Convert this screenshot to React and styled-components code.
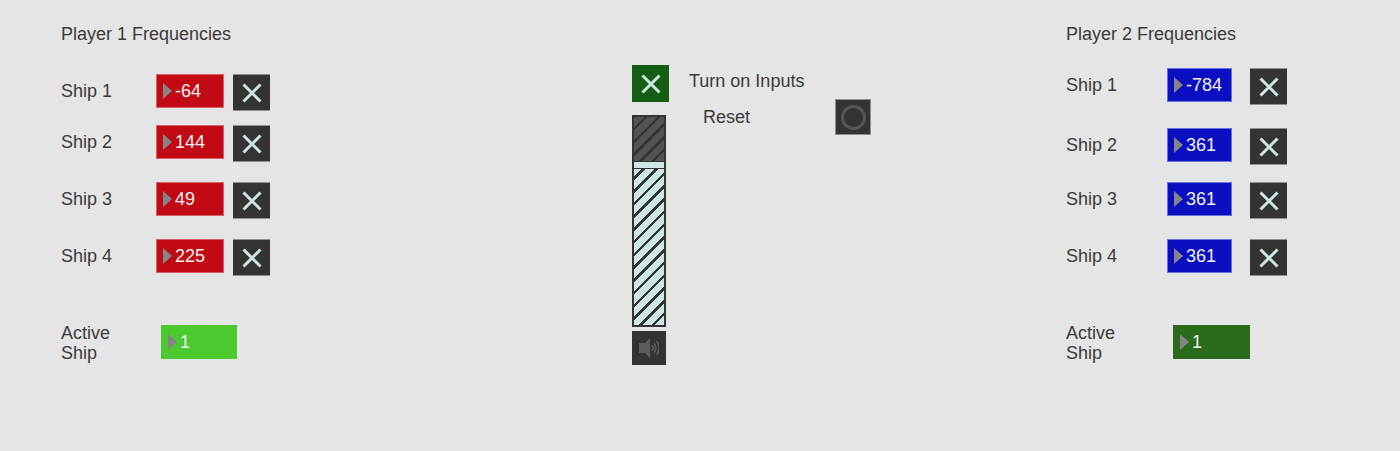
import React from 'react';
import styled, { createGlobalStyle } from 'styled-components';

const GlobalStyle = createGlobalStyle`
  html, body {
    margin: 0;
    height: 100%;
    background: #e5e5e5;
  }
  body {
    font-family: "Liberation Sans", Arial, sans-serif;
    color: #3a3a3a;
    overflow: hidden;
  }
`;

const Page = styled.div`
  display: flex;
  width: 1400px;
  height: 451px;
  padding-left: 61px;
  box-sizing: border-box;
  background: #e5e5e5;
`;

const Panel = styled.section`
  flex: none;
  width: ${(p) => p.$width}px;
  display: flex;
  flex-direction: column;
`;

const Title = styled.div`
  height: ${(p) => p.$height}px;
  padding-top: 24px;
  box-sizing: border-box;
  font-size: 18px;
  line-height: 20px;
`;

const Row = styled.div`
  display: flex;
  align-items: center;
  height: 37px;
  margin-top: ${(p) => p.$top}px;
`;

const Label = styled.div`
  flex: none;
  width: ${(p) => p.$width}px;
  padding-bottom: 4px;
  font-size: 18px;
  line-height: 20px;
`;

const ActiveLabel = styled(Label)`
  padding-bottom: 0;
  padding-top: 2px;
`;

const NumberBox = styled.div`
  flex: none;
  display: flex;
  align-items: center;
  box-sizing: border-box;
  width: ${(p) => p.$width}px;
  height: 34px;
  margin-right: ${(p) => p.$gap || 0}px;
  margin-top: ${(p) => (p.$lift ? -3 : 0)}px;
  padding-left: 6px;
  background: ${(p) => p.$bg};
  border: 1px solid ${(p) => p.$edge || p.$bg};
  color: #f1f1f1;
  font-size: 18px;
`;

const Arrow = styled.span`
  flex: none;
  width: 0;
  height: 0;
  margin-right: 3px;
  border-style: solid;
  border-width: 8px 0 8px 9px;
  border-color: transparent transparent transparent #858585;
`;

const ToggleButton = styled.button`
  flex: none;
  display: flex;
  align-items: center;
  justify-content: center;
  width: 37px;
  height: 37px;
  padding: 0;
  background: ${(p) => p.$bg || '#333333'};
  border: none;
  border-top: 1px solid ${(p) => p.$edge || '#8f8f8f'};
  border-bottom: 1px solid ${(p) => p.$edge || '#8f8f8f'};
  box-sizing: border-box;
`;

const ActiveRow = styled.div`
  display: flex;
  align-items: center;
  height: 40px;
  margin-top: 46px;
`;

const Center = styled.section`
  flex: none;
  width: 434px;
  display: flex;
  padding-top: 65px;
  box-sizing: border-box;
`;

const MixerColumn = styled.div`
  flex: none;
  width: 57px;
  display: flex;
  flex-direction: column;
  align-items: flex-start;
`;

const Fader = styled.div`
  width: 34px;
  height: 212px;
  margin-top: 13px;
  box-sizing: border-box;
  border: 2px solid #333333;
  display: flex;
  flex-direction: column;
`;

const FaderTop = styled.div`
  height: 44px;
  background: repeating-linear-gradient(-45deg, #535353 0 6.5px, #333333 6.5px 9px);
`;

const FaderHandle = styled.div`
  height: 6px;
  background: #cde6e6;
  border-top: 1px solid #333333;
  border-bottom: 1px solid #333333;
`;

const FaderBottom = styled.div`
  flex: 1;
  background: repeating-linear-gradient(-45deg, #cde6e6 0 6.5px, #333333 6.5px 9px);
`;

const SpeakerButton = styled.div`
  width: 34px;
  height: 34px;
  margin-top: 4px;
  display: flex;
  align-items: center;
  justify-content: center;
  background: #333333;
`;

const InputsColumn = styled.div`
  flex: none;
  display: flex;
  flex-direction: column;
`;

const InputsLabel = styled.div`
  margin-top: 6px;
  font-size: 18px;
  line-height: 20px;
`;

const ResetRow = styled.div`
  display: flex;
  align-items: center;
  width: 182px;
  height: 36px;
  margin-top: 8px;
  padding-left: 14px;
  box-sizing: border-box;
  justify-content: space-between;
  font-size: 18px;
`;

const ResetButton = styled.button`
  flex: none;
  display: flex;
  align-items: center;
  justify-content: center;
  width: 36px;
  height: 36px;
  padding: 0;
  background: #333333;
  border: 1px solid #8f8f8f;
  box-sizing: border-box;
`;

const Ring = styled.span`
  width: 25px;
  height: 25px;
  box-sizing: border-box;
  border: 3px solid #565656;
  border-radius: 50%;
`;

const CrossIcon = () => (
  <svg width="20" height="20" viewBox="0 0 20 20">
    <path d="M1.5 1.5 L18.5 18.5 M18.5 1.5 L1.5 18.5" stroke="#cde6e6" strokeWidth="3" fill="none" />
  </svg>
);

const SpeakerIcon = () => (
  <svg width="20" height="20" viewBox="0 0 20 20">
    <path d="M0 5 H6 L11 0 V20 L6 15 H0 Z" fill="#5c5c5c" />
    <path
      d="M13 7.5 A3.5 3.5 0 0 1 13 12.5 M15 5.5 A6.5 6.5 0 0 1 15 14.5 M17.5 3.5 A9.5 9.5 0 0 1 17.5 16.5"
      stroke="#5c5c5c"
      strokeWidth="1.8"
      fill="none"
    />
  </svg>
);

const player1 = {
  title: 'Player 1 Frequencies',
  titleHeight: 74,
  labelWidth: 95,
  boxWidth: 68,
  boxGap: 9,
  boxBg: '#c10a14',
  boxEdge: '#d9606a',
  activeLabel: 100,
  activeWidth: 76,
  activeBg: '#4cc92f',
  rows: [
    { name: 'Ship 1', value: '-64', top: 0 },
    { name: 'Ship 2', value: '144', top: 14 },
    { name: 'Ship 3', value: '49', top: 20 },
    { name: 'Ship 4', value: '225', top: 20 },
  ],
};

const player2 = {
  title: 'Player 2 Frequencies',
  titleHeight: 68,
  labelWidth: 101,
  boxWidth: 65,
  boxGap: 18,
  boxBg: '#0a0fc1',
  boxEdge: '#6a70dc',
  activeLabel: 107,
  activeWidth: 77,
  activeBg: '#2b6b1c',
  rows: [
    { name: 'Ship 1', value: '-784', top: 0 },
    { name: 'Ship 2', value: '361', top: 23 },
    { name: 'Ship 3', value: '361', top: 17 },
    { name: 'Ship 4', value: '361', top: 20 },
  ],
};

function PlayerPanel({ player, width }) {
  return (
    <Panel $width={width}>
      <Title $height={player.titleHeight}>{player.title}</Title>
      {player.rows.map((row) => (
        <Row key={row.name} $top={row.top}>
          <Label $width={player.labelWidth}>{row.name}</Label>
          <NumberBox
            $width={player.boxWidth}
            $gap={player.boxGap}
            $bg={player.boxBg}
            $edge={player.boxEdge}
            $lift
          >
            <Arrow />
            {row.value}
          </NumberBox>
          <ToggleButton>
            <CrossIcon />
          </ToggleButton>
        </Row>
      ))}
      <ActiveRow>
        <ActiveLabel $width={player.activeLabel}>
          Active
          <br />
          Ship
        </ActiveLabel>
        <NumberBox $width={player.activeWidth} $bg={player.activeBg}>
          <Arrow />
          1
        </NumberBox>
      </ActiveRow>
    </Panel>
  );
}

export default function App() {
  return (
    <Page>
      <GlobalStyle />
      <PlayerPanel player={player1} width={571} />
      <Center>
        <MixerColumn>
          <ToggleButton $bg="#155f14" $edge="#155f14">
            <CrossIcon />
          </ToggleButton>
          <Fader>
            <FaderTop />
            <FaderHandle />
            <FaderBottom />
          </Fader>
          <SpeakerButton>
            <SpeakerIcon />
          </SpeakerButton>
        </MixerColumn>
        <InputsColumn>
          <InputsLabel>Turn on Inputs</InputsLabel>
          <ResetRow>
            Reset
            <ResetButton>
              <Ring />
            </ResetButton>
          </ResetRow>
        </InputsColumn>
      </Center>
      <PlayerPanel player={player2} width={300} />
    </Page>
  );
}
